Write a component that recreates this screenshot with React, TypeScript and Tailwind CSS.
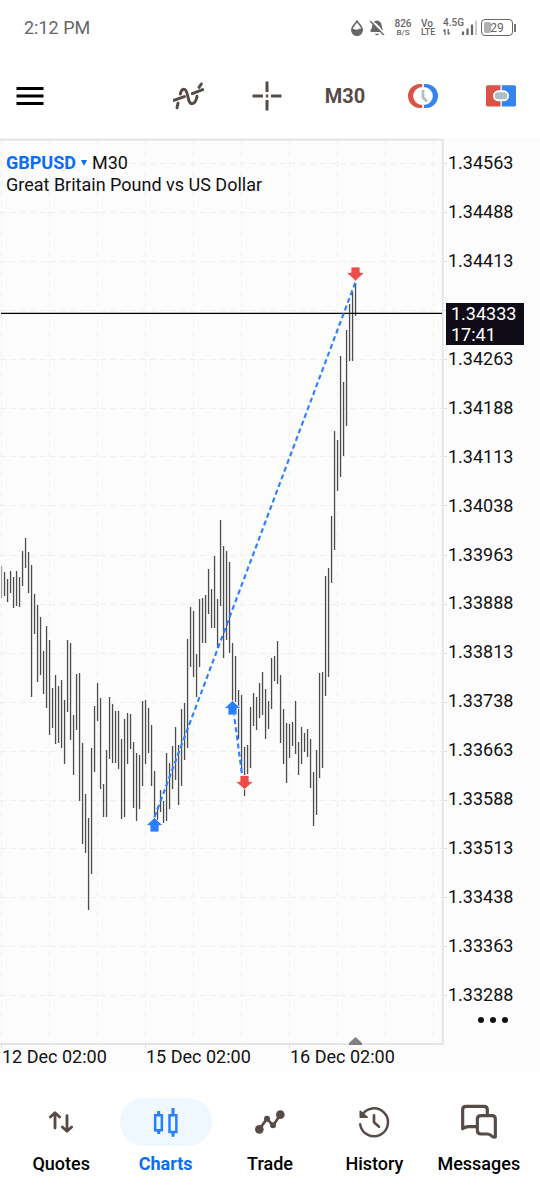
import type { ReactNode } from "react";
import { BellOff } from "lucide-react";

type Bar = [number, number];

const bars: Bar[] = [
  [566, 598], [572, 596], [579, 602], [571, 593], [577, 608], [571, 606], [577, 607], [551, 586], [538, 568], [552, 593],
  [565, 697], [594, 634], [605, 682], [617, 675], [651, 694], [626, 708], [640, 735], [688, 728], [675, 744], [686, 743],
  [680, 748], [700, 764], [640, 712], [643, 740], [715, 775], [674, 730], [673, 801], [743, 844], [794, 853], [818, 910],
  [748, 874], [706, 772], [683, 721], [698, 789], [784, 817], [750, 817], [697, 759], [704, 763], [711, 763], [711, 769],
  [739, 819], [719, 817], [713, 764], [714, 749], [742, 808], [753, 821], [755, 809], [701, 786], [700, 764], [708, 753],
  [725, 786], [771, 818], [808, 820], [790, 812], [801, 823], [753, 821], [763, 809], [746, 789], [727, 780], [745, 805],
  [709, 786], [703, 760], [639, 748], [607, 667], [611, 677], [654, 697], [599, 667], [598, 643], [595, 643], [569, 614],
  [589, 628], [556, 628], [599, 648], [520, 606], [546, 658], [551, 640], [562, 653], [643, 701], [656, 702], [690, 739],
  [695, 773], [747, 796], [745, 774], [707, 768], [693, 726], [697, 730], [683, 718], [672, 715], [689, 739], [701, 729],
  [658, 709], [656, 681], [641, 684], [675, 743], [709, 764], [723, 783], [724, 758], [722, 746], [701, 754], [742, 775],
  [727, 764], [733, 752], [729, 757], [739, 788], [772, 826], [750, 815], [673, 778], [672, 768], [576, 696], [568, 677],
  [516, 583], [431, 550], [440, 491], [356, 477], [382, 456], [330, 426], [304, 361], [292, 361], [283, 316],
];

// The empty step is the one covered by the current price tag.
const prices = [
  "1.34563", "1.34488", "1.34413", "", "1.34263", "1.34188", "1.34113", "1.34038", "1.33963",
  "1.33888", "1.33813", "1.33738", "1.33663", "1.33588", "1.33513", "1.33438", "1.33363", "1.33288",
];

const dates = ["12 Dec 02:00", "15 Dec 02:00", "16 Dec 02:00"];

const gridX = [1, 49, 97, 145, 193, 241, 289, 337, 385, 433];
const gridY = [163, 212, 261, 310, 359, 408, 456, 505, 555, 604, 653, 702, 751, 800, 848, 897, 946, 995];

function StatusBar() {
  return (
    <header className="flex h-[54px] items-center justify-between pt-px pr-[26px] pl-6 text-[#666]">
      <time className="text-[18px] leading-6">2:12 PM</time>
      <div className="flex items-center font-medium">
        <svg className="h-4 w-3" viewBox="0 0 12 16" role="img" aria-label="Eye comfort">
          <path d="M6 1.200C4.500 4 .8 6.500.8 10a5.200 5.200 0 0 0 10.400 0C11.200 6.500 7.500 4 6 1.200z" fill="none" stroke="#666" strokeWidth="1.600" />
          <path d="M1 9c2-1 3.200 1.600 5.500.6C8.500 9 9.500 8 11 9v2a5 5 0 0 1-10 0z" fill="#666" />
        </svg>
        <BellOff className="ml-1.5 size-4 fill-[#666]" strokeWidth={2} aria-label="Muted" />
        <span className="ml-2 flex w-5 flex-col items-center leading-[9px]">
          <span className="text-[10px]">826</span>
          <span className="text-[8px]">B/S</span>
        </span>
        <span className="ml-2 flex w-5 flex-col text-[9px] leading-[9px]">
          <span className="text-[10px]">Vo</span>
          <span>LTE</span>
        </span>
        <span className="relative ml-0.5 h-5 w-9 text-[10px] leading-[10px]">
          <span className="block">4.5G</span>
          <svg className="absolute inset-0 h-5 w-9" viewBox="0 0 36 20" aria-hidden="true">
            <path d="M2 17v-5.500M.5 13.200L2 11.500M5.200 11v5.500M6.700 14.800L5.200 16.500" stroke="#666" strokeWidth="1.300" fill="none" />
            <path d="M20 13.500v3.500M24.500 10.500v6.500M29 6.500v10.500" stroke="#666" strokeWidth="2.200" />
            <path d="M33 2.500v14.500" stroke="#ccc" strokeWidth="2" />
          </svg>
        </span>
        <span className="relative ml-0.5 flex h-[17px] w-8 items-center justify-center rounded-[4px] border border-[#666] text-[12px] leading-4 font-normal">
          <span className="absolute top-0.5 bottom-0.5 left-0.5 w-[7px] rounded-[2px] bg-[#b0b0b0]" />
          <span className="relative">29</span>
        </span>
        <span className="-mr-0.5 ml-px h-2 w-0.5 bg-[#777]" />
      </div>
    </header>
  );
}

function ToolButton({ label, children }: { label: string; children: ReactNode }) {
  return (
    <button type="button" aria-label={label} className="flex h-full w-[78px] items-center justify-center">
      {children}
    </button>
  );
}

function Toolbar() {
  return (
    <div className="flex h-[84px] items-center justify-between">
      <button type="button" aria-label="Menu" className="flex h-full items-center px-4">
        <svg className="h-5 w-7" viewBox="0 0 28 20" stroke="#000" strokeWidth="2.800">
          <path d="M.5 2.500h27M.5 10h27M.5 17.500h27" />
        </svg>
      </button>
      <div className="flex h-full">
        <ToolButton label="Indicators">
          <svg className="h-[30px] w-8" viewBox="519 243 96 90" fill="none" stroke="#574b47" strokeWidth="9" strokeLinecap="round" strokeLinejoin="round">
            <path d="M531 323l3-13M541 282c2-9 6-14 11-14 14 0 9 43 24 43 9 0 13-10 15-22M597 262l7-10" />
            <path d="M521 301l32-11M577 281l31-12" />
          </svg>
        </ToolButton>
        <ToolButton label="Crosshair">
          <svg className="size-[30px]" viewBox="0 0 30 30" stroke="#574b47" strokeWidth="3">
            <path d="M15 .5v10.500M15 19v10.500M.5 15H11M19 15h10.500M13.800 15h2.400" />
          </svg>
        </ToolButton>
        <ToolButton label="Timeframe">
          <span className="text-[20px] leading-6 font-bold text-[#574b47]">M30</span>
        </ToolButton>
        <ToolButton label="Sessions">
          <svg className="h-6 w-[30px]" viewBox="414 252 90 72">
            <path d="M456.500 252H450a36 36 0 0 0 0 72h6.500v-9a27 27 0 0 1 0-54z" fill="#db5246" />
            <path d="M461.500 252h6.500a36 36 0 0 1 0 72h-6.500v-9a27 27 0 0 0 0-54z" fill="#3584ee" />
            <path d="M459 270v22.500l12 12" fill="none" stroke="#b0bec5" strokeWidth="8.500" />
          </svg>
        </ToolButton>
        <ToolButton label="One-click trading">
          <svg className="h-[22px] w-[30px]" viewBox="648 256 90 66">
            <path d="M653 257h38.500v63.500H653q-5 0-5-5V262q0-5 5-5z" fill="#db5246" />
            <path d="M695.500 257H733q5 0 5 5v53.500q0 5-5 5h-37.500z" fill="#3584ee" />
            <rect x="669" y="272" width="48" height="33" rx="16" fill="#fff" />
            <rect x="674" y="278" width="38" height="21" rx="10.500" fill="#b0bec5" />
          </svg>
        </ToolButton>
      </div>
    </div>
  );
}

function PriceChart() {
  return (
    <svg viewBox="0 138 447 910" preserveAspectRatio="none" className="block h-[910px] w-full" role="img" aria-label="GBPUSD price chart">
      <g stroke="#f0f0f0" strokeWidth="1" strokeDasharray="6 4">
        {gridX.map((x) => (
          <line key={x} x1={x + 0.5} x2={x + 0.5} y1="141" y2="1043" />
        ))}
        {gridY.map((y) => (
          <line key={y} x1="0" x2="442" y1={y + 0.5} y2={y + 0.5} />
        ))}
      </g>
      <path d="M0 139.700H442.800V1044H0" fill="none" stroke="#e4e4e4" strokeWidth="1.900" />
      <g stroke="#dedede">
        {gridY.map((y) => (
          <line key={y} x1="444" x2="447" y1={y + 0.5} y2={y + 0.5} />
        ))}
        {[1, 145, 289].map((x) => (
          <line key={x} x1={x + 0.5} x2={x + 0.5} y1="1045" y2="1048" />
        ))}
      </g>
      {bars.map(([top, bottom], i) => (
        <rect key={i} x={0.9 + i * 3} y={top} width="1.300" height={bottom - top} fill={i === 0 ? "#a5a5a5" : "#4c4c4c"} />
      ))}
      <path d="M1 313.400H442" stroke="#000" strokeWidth="1.400" />
      <g fill="none" stroke="#2a7fff" strokeWidth="2.100" strokeDasharray="5 3.200">
        <path d="M154.500 817L355.500 282" />
        <path d="M233.500 711L242 774" />
      </g>
      <g stroke="#fcfcfc" strokeWidth="0.800">
        <path d="M154.500 817.500l8.500 8h-4v6.500h-9v-6.500h-4z" fill="#2a7fff" />
        <path d="M232.500 700.500l8.500 8h-4v6.500h-9v-6.500h-4z" fill="#2a7fff" />
        <path d="M240 775.500h9v6h4.500l-9 8-9-8h4.500z" fill="#eb4d4b" />
        <path d="M351 267h9v5.500h4.500l-9 8.500-9-8.500h4.500z" fill="#eb4d4b" />
      </g>
      <path d="M355.500 1037l6.500 6v2h-13v-2z" fill="#808080" />
    </svg>
  );
}

function ChartPanel() {
  return (
    <section className="bg-[#fcfcfc] text-[18px] text-[#111]">
      <div className="flex">
        <div className="relative min-w-0 flex-1">
          <PriceChart />
          <div className="absolute top-3.5 left-1.5 leading-[22px]">
            <div className="flex items-center">
              <button type="button" className="flex items-center font-bold text-[#0a6cf7]">
                GBPUSD
                <svg className="mx-[5px] h-1.5 w-1.5" viewBox="0 0 6 6" fill="#0a6cf7" aria-hidden="true">
                  <path d="M0 0h6L3 6z" />
                </svg>
              </button>
              <span>M30</span>
            </div>
            <h1>Great Britain Pound vs US Dollar</h1>
          </div>
        </div>
        <div className="relative flex w-[93px] flex-col">
          <ul className="flex flex-1 flex-col justify-between pt-[13px] pl-px leading-6">
            {prices.map((price, i) => (
              <li key={i} className="h-6">{price}</li>
            ))}
          </ul>
          <button type="button" aria-label="More" className="flex h-[41px] items-start justify-center gap-1.5 pt-2.5 pr-px">
            <span className="size-1.5 rounded-full bg-[#111]" />
            <span className="size-1.5 rounded-full bg-[#111]" />
            <span className="size-1.5 rounded-full bg-[#111]" />
          </button>
          <div className="absolute top-[165px] -left-px w-[78px] bg-[#0f0c18] pl-[5px] leading-[21px] text-white">
            <p>1.34333</p>
            <p>17:41</p>
          </div>
        </div>
      </div>
      <ol className="grid w-4/5 grid-cols-3 pb-[5px] leading-[18px]">
        {dates.map((date) => (
          <li key={date} className="pl-0.5 whitespace-nowrap">{date}</li>
        ))}
      </ol>
    </section>
  );
}

function NavItem({ label, active = false, children }: { label: string; active?: boolean; children: ReactNode }) {
  return (
    <a
      href="#"
      aria-current={active ? "page" : undefined}
      className={`flex flex-1 basis-0 flex-col items-center gap-1.5 text-[18px] leading-6 ${active ? "font-bold text-[#0a6cf7]" : "font-medium text-black"}`}
    >
      <span className={`flex h-12 w-[92px] items-center justify-center rounded-full ${active ? "bg-[#eff7ff]" : ""}`}>{children}</span>
      {label}
    </a>
  );
}

function BottomNav() {
  return (
    <nav className="flex px-[9px] pt-[27px]">
      <NavItem label="Quotes">
        <svg className="h-10 w-10" viewBox="125 366 120 120" fill="none" stroke="#574b47" strokeWidth="8.500" strokeLinecap="round" strokeLinejoin="round">
          <path d="M167 399v45M153 411l14-13 14 13M203 407v47M189 441l14 13 14-13" />
        </svg>
      </NavItem>
      <NavItem label="Charts" active>
        <svg className="h-10 w-10" viewBox="438 366 120 120" fill="none" stroke="#2a7fff" strokeWidth="7.500">
          <path d="M465.500 405.500h20v45h-20zM508.500 405.500h20.500v50.500h-20.500z" />
          <path d="M476 393v11M476 453v9M519 384v20M519 457v13" strokeWidth="9" />
        </svg>
      </NavItem>
      <NavItem label="Trade">
        <svg className="h-10 w-10" viewBox="750 366 120 120" fill="#574b47">
          <path d="M778 448l23-32 18 21 22-33" fill="none" stroke="#574b47" strokeWidth="8" />
          <circle cx="778" cy="448" r="13" />
          <circle cx="841" cy="404" r="13" />
          <circle cx="801" cy="416" r="9" />
          <circle cx="819" cy="436" r="9" />
        </svg>
      </NavItem>
      <NavItem label="History">
        <svg className="h-10 w-10" viewBox="252 366 120 120" fill="none" stroke="#574b47" strokeWidth="7.500" strokeLinecap="round" strokeLinejoin="round">
          <path d="M270.500 433a42 42 0 1 0 4.500-26" />
          <path d="M312 406v21l15 13" strokeWidth="8" />
          <path d="M271 394v17.500h20z" fill="#574b47" strokeWidth="5" />
        </svg>
      </NavItem>
      <NavItem label="Messages">
        <svg className="h-10 w-10" viewBox="566 366 120 120" fill="none" stroke="#574b47" strokeWidth="9.500" strokeLinecap="round" strokeLinejoin="round">
          <path d="M651 400v-11q0-10-10-10h-54q-10 0-10 10v57q8-6 18-6h21" />
          <path d="M675 471v-54q0-10-10-10h-33q-11 0-11 11v33q0 11 11 11h19q8 0 13 6 4 4 11 3z" />
        </svg>
      </NavItem>
    </nav>
  );
}

export default function App() {
  return (
    <main className="min-h-screen bg-white font-[Roboto,sans-serif]">
      <StatusBar />
      <Toolbar />
      <ChartPanel />
      <BottomNav />
    </main>
  );
}
